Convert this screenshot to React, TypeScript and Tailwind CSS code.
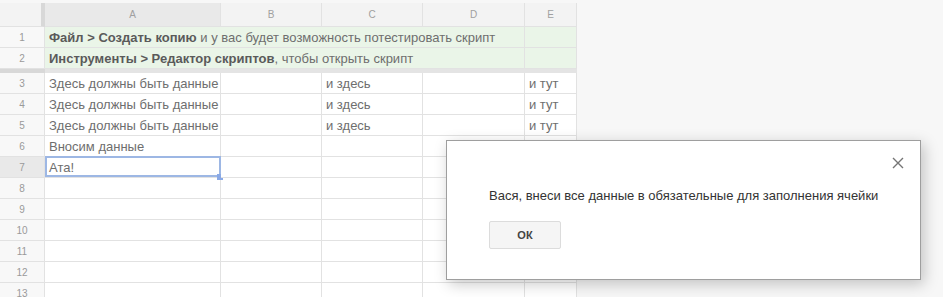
import React from 'react';

const COLS = [
  { key: 'A', w: 'w-[176px]' },
  { key: 'B', w: 'w-[101px]' },
  { key: 'C', w: 'w-[101px]' },
  { key: 'D', w: 'w-[102px]' },
  { key: 'E', w: 'w-[52px]' },
];

type Row = {
  n: number;
  cells?: (string | null)[];
  wide?: React.ReactNode;
  green?: boolean;
};

const ROWS: Row[] = [
  {
    n: 1,
    green: true,
    wide: (
      <>
        <b className="font-bold text-[#5a5a5a]">Файл &gt; Создать копию</b> и у вас будет возможность потестировать скрипт
      </>
    ),
  },
  {
    n: 2,
    green: true,
    wide: (
      <>
        <b className="font-bold text-[#5a5a5a]">Инструменты &gt; Редактор скриптов</b>, чтобы открыть скрипт
      </>
    ),
  },
  { n: 3, cells: ['Здесь должны быть данные', null, 'и здесь', null, 'и тут'] },
  { n: 4, cells: ['Здесь должны быть данные', null, 'и здесь', null, 'и тут'] },
  { n: 5, cells: ['Здесь должны быть данные', null, 'и здесь', null, 'и тут'] },
  { n: 6, cells: ['Вносим данные', null, null, null, null] },
  { n: 7, cells: ['Ата!', null, null, null, null] },
  { n: 8 },
  { n: 9 },
  { n: 10 },
  { n: 11 },
  { n: 12 },
  { n: 13 },
];

function SheetRow({ row }: { row: Row }) {
  const selected = row.n === 7;
  return (
    <div className={`flex h-[21px] relative ${selected ? 'z-10' : ''}`}>
      <div
        className={`w-[45px] shrink-0 box-border border-r border-b border-[#e2e2e2] flex items-center justify-center text-[10px] text-[#9a9a9a] ${
          selected ? 'bg-[#e9e9e9]' : 'bg-[#f8f8f8]'
        }`}
      >
        {row.n}
      </div>
      {COLS.map((c, i) => {
        const text = row.cells ? row.cells[i] : null;
        const isSel = selected && i === 0;
        return (
          <div
            key={c.key}
            className={`${c.w} shrink-0 box-border border-b border-[#e2e2e2] relative flex items-center text-[13px] text-[#6e6e6e] whitespace-nowrap ${
              row.green ? 'bg-[#eaf5e8]' : 'bg-white'
            } ${row.wide && i < 4 ? (i === 3 ? 'border-r' : '') : 'border-r'} ${
              (row.wide && i === 0) || isSel ? 'overflow-visible' : 'overflow-hidden'
            }`}
          >
            {row.wide && i === 0 && (
              <span className="absolute left-[4px] top-[1px] z-10 leading-[19px]">{row.wide}</span>
            )}
            {text && <span className="pl-[4px] leading-[19px]">{text}</span>}
            {isSel && (
              <>
                <div className="absolute left-0 top-[-1px] right-[-1px] bottom-0 border-2 border-[#9db7e4] pointer-events-none" />
                <div className="absolute right-[-3px] bottom-[-3px] w-[6px] h-[6px] bg-[#8aa9e6]" />
              </>
            )}
          </div>
        );
      })}
    </div>
  );
}

export default function App() {
  return (
    <div
      className="relative w-[943px] h-[297px] overflow-hidden bg-[#f7f7f7] pt-[3px]"
      style={{ fontFamily: '"Liberation Sans", Arial, sans-serif' }}
    >
      <div className="w-[577px] bg-white">
        {/* Column headers */}
        <div className="flex h-[24px]">
          <div className="w-[45px] shrink-0 box-border bg-[#f3f3f3] border-b border-[#e2e2e2] border-r-[4px] border-r-[#d8d8d8]" />
          {COLS.map((c) => (
            <div
              key={c.key}
              className={`${c.w} shrink-0 box-border border-r border-b border-[#e2e2e2] flex items-center justify-center text-[10px] text-[#a0a0a0] ${
                c.key === 'A' ? 'bg-[#e9e9e9]' : 'bg-[#f3f3f3]'
              }`}
            >
              {c.key}
            </div>
          ))}
        </div>

        <SheetRow row={ROWS[0]} />
        <SheetRow row={ROWS[1]} />
        {/* Frozen rows divider */}
        <div className="h-[4px] flex">
          <div className="w-[45px] bg-[#d8d8d8]" />
          <div className="flex-1 bg-[#e4e4e4]" />
        </div>
        {ROWS.slice(2).map((r) => (
          <SheetRow key={r.n} row={r} />
        ))}
      </div>

      {/* Alert dialog */}
      <div className="absolute z-20 left-[446px] top-[140px] w-[475px] h-[140px] box-border bg-white border border-[#9e9e9e] shadow-[3px_4px_14px_rgba(0,0,0,0.22)] flex flex-col">
        <div className="flex justify-end pt-[16px] pr-[16px]">
          <svg width="12" height="12" viewBox="0 0 12 12" className="text-[#757575]">
            <path d="M1 1 L11 11 M11 1 L1 11" stroke="currentColor" strokeWidth="1.4" fill="none" />
          </svg>
        </div>
        <p className="mt-[19px] pl-[42px] text-[13px] leading-[16px] text-[#333]">
          Вася, внеси все данные в обязательные для заполнения ячейки
        </p>
        <div className="pl-[42px] mt-[17px]">
          <button className="w-[72px] h-[28px] box-border bg-[#f5f5f5] border border-[#dcdcdc] rounded-[2px] text-[11px] font-bold text-[#444]">
            ОК
          </button>
        </div>
      </div>
    </div>
  );
}
